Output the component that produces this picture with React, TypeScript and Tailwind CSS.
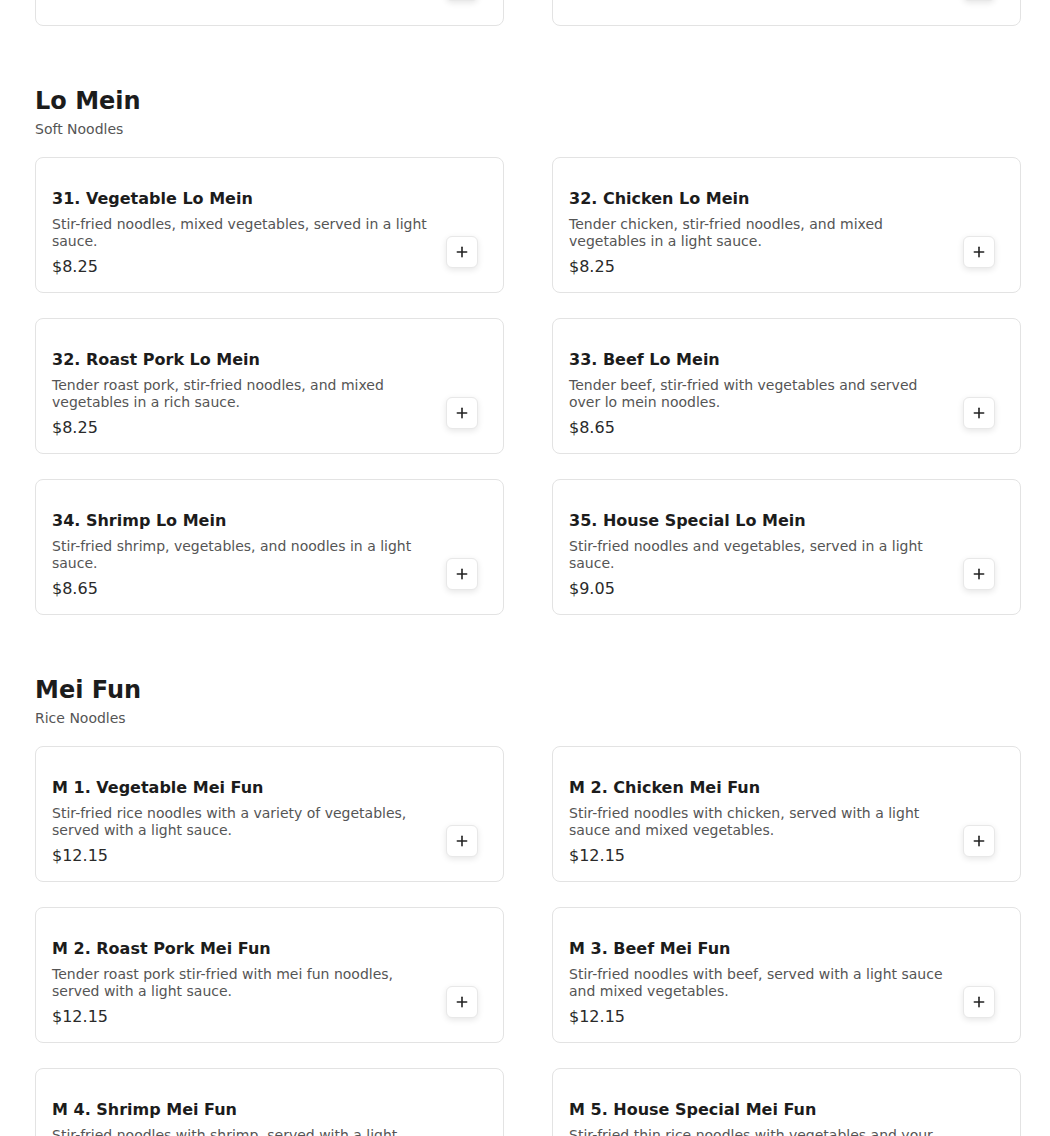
import { Plus } from 'lucide-react';

type Item = { name: string; desc: string; price: string };
type Section = { title: string; subtitle: string; items: Item[] };

const SECTIONS: Section[] = [
  {
    title: 'Lo Mein',
    subtitle: 'Soft Noodles',
    items: [
      { name: '31. Vegetable Lo Mein', desc: 'Stir-fried noodles, mixed vegetables, served in a light sauce.', price: '$8.25' },
      { name: '32. Chicken Lo Mein', desc: 'Tender chicken, stir-fried noodles, and mixed vegetables in a light sauce.', price: '$8.25' },
      { name: '32. Roast Pork Lo Mein', desc: 'Tender roast pork, stir-fried noodles, and mixed vegetables in a rich sauce.', price: '$8.25' },
      { name: '33. Beef Lo Mein', desc: 'Tender beef, stir-fried with vegetables and served over lo mein noodles.', price: '$8.65' },
      { name: '34. Shrimp Lo Mein', desc: 'Stir-fried shrimp, vegetables, and noodles in a light sauce.', price: '$8.65' },
      { name: '35. House Special Lo Mein', desc: 'Stir-fried noodles and vegetables, served in a light sauce.', price: '$9.05' },
    ],
  },
  {
    title: 'Mei Fun',
    subtitle: 'Rice Noodles',
    items: [
      { name: 'M 1. Vegetable Mei Fun', desc: 'Stir-fried rice noodles with a variety of vegetables, served with a light sauce.', price: '$12.15' },
      { name: 'M 2. Chicken Mei Fun', desc: 'Stir-fried noodles with chicken, served with a light sauce and mixed vegetables.', price: '$12.15' },
      { name: 'M 2. Roast Pork Mei Fun', desc: 'Tender roast pork stir-fried with mei fun noodles, served with a light sauce.', price: '$12.15' },
      { name: 'M 3. Beef Mei Fun', desc: 'Stir-fried noodles with beef, served with a light sauce and mixed vegetables.', price: '$12.15' },
      { name: 'M 4. Shrimp Mei Fun', desc: 'Stir-fried noodles with shrimp, served with a light sauce.', price: '$12.65' },
      { name: 'M 5. House Special Mei Fun', desc: 'Stir-fried thin rice noodles with vegetables and your choice of meats.', price: '$13.05' },
    ],
  },
];

export default function App() {
  return (
    <div className="h-[1136px] overflow-hidden bg-white" style={{ fontFamily: '"DejaVu Sans", sans-serif' }}>
      <div className="-mt-[110px] pl-[35px] pr-[29px]">
        {/* tail of the previous category, scrolled mostly out of view */}
        <div className="grid grid-cols-2 gap-x-12">
          <div className="flex h-[136px] items-end justify-end rounded-lg border border-[#e3e3e3] pr-[25px] pb-[24px]">
            <AddButton />
          </div>
          <div className="flex h-[136px] items-end justify-end rounded-lg border border-[#e3e3e3] pr-[25px] pb-[24px]">
            <AddButton />
          </div>
        </div>

        {SECTIONS.map((s) => (
          <section key={s.title} className="mt-[59px]">
            <h2 className="text-2xl leading-8 font-bold text-[#1c1c1c]">{s.title}</h2>
            <p className="mt-[2px] text-sm leading-5 text-[#555]">{s.subtitle}</p>
            <div className="mt-[18px] grid grid-cols-2 gap-x-12 gap-y-[25px]">
              {s.items.map((it) => (
                <MenuCard key={it.name} item={it} />
              ))}
            </div>
          </section>
        ))}
      </div>
    </div>
  );
}

function MenuCard({ item }: { item: Item }) {
  return (
    <div className="flex gap-4 rounded-lg border border-[#e3e3e3] bg-white pt-[29px] pr-[25px] pb-[13px] pl-4">
      <div className="min-w-0 flex-1">
        <h3 className="text-base leading-6 font-bold text-[#1c1c1c]">{item.name}</h3>
        <p className="mt-[5px] text-sm leading-[17px] text-[#555]">{item.desc}</p>
        <p className="mt-[5px] text-base leading-6 text-[#2a2a2a]">{item.price}</p>
      </div>
      <div className="mb-[11px] self-end">
        <AddButton />
      </div>
    </div>
  );
}

function AddButton() {
  return (
    <button
      type="button"
      className="flex h-8 w-8 shrink-0 items-center justify-center rounded-md border border-[#e8e8e8] bg-white text-[#222] shadow-[0_2px_6px_rgba(0,0,0,0.1)]"
    >
      <Plus size={16} strokeWidth={2.4} />
    </button>
  );
}
